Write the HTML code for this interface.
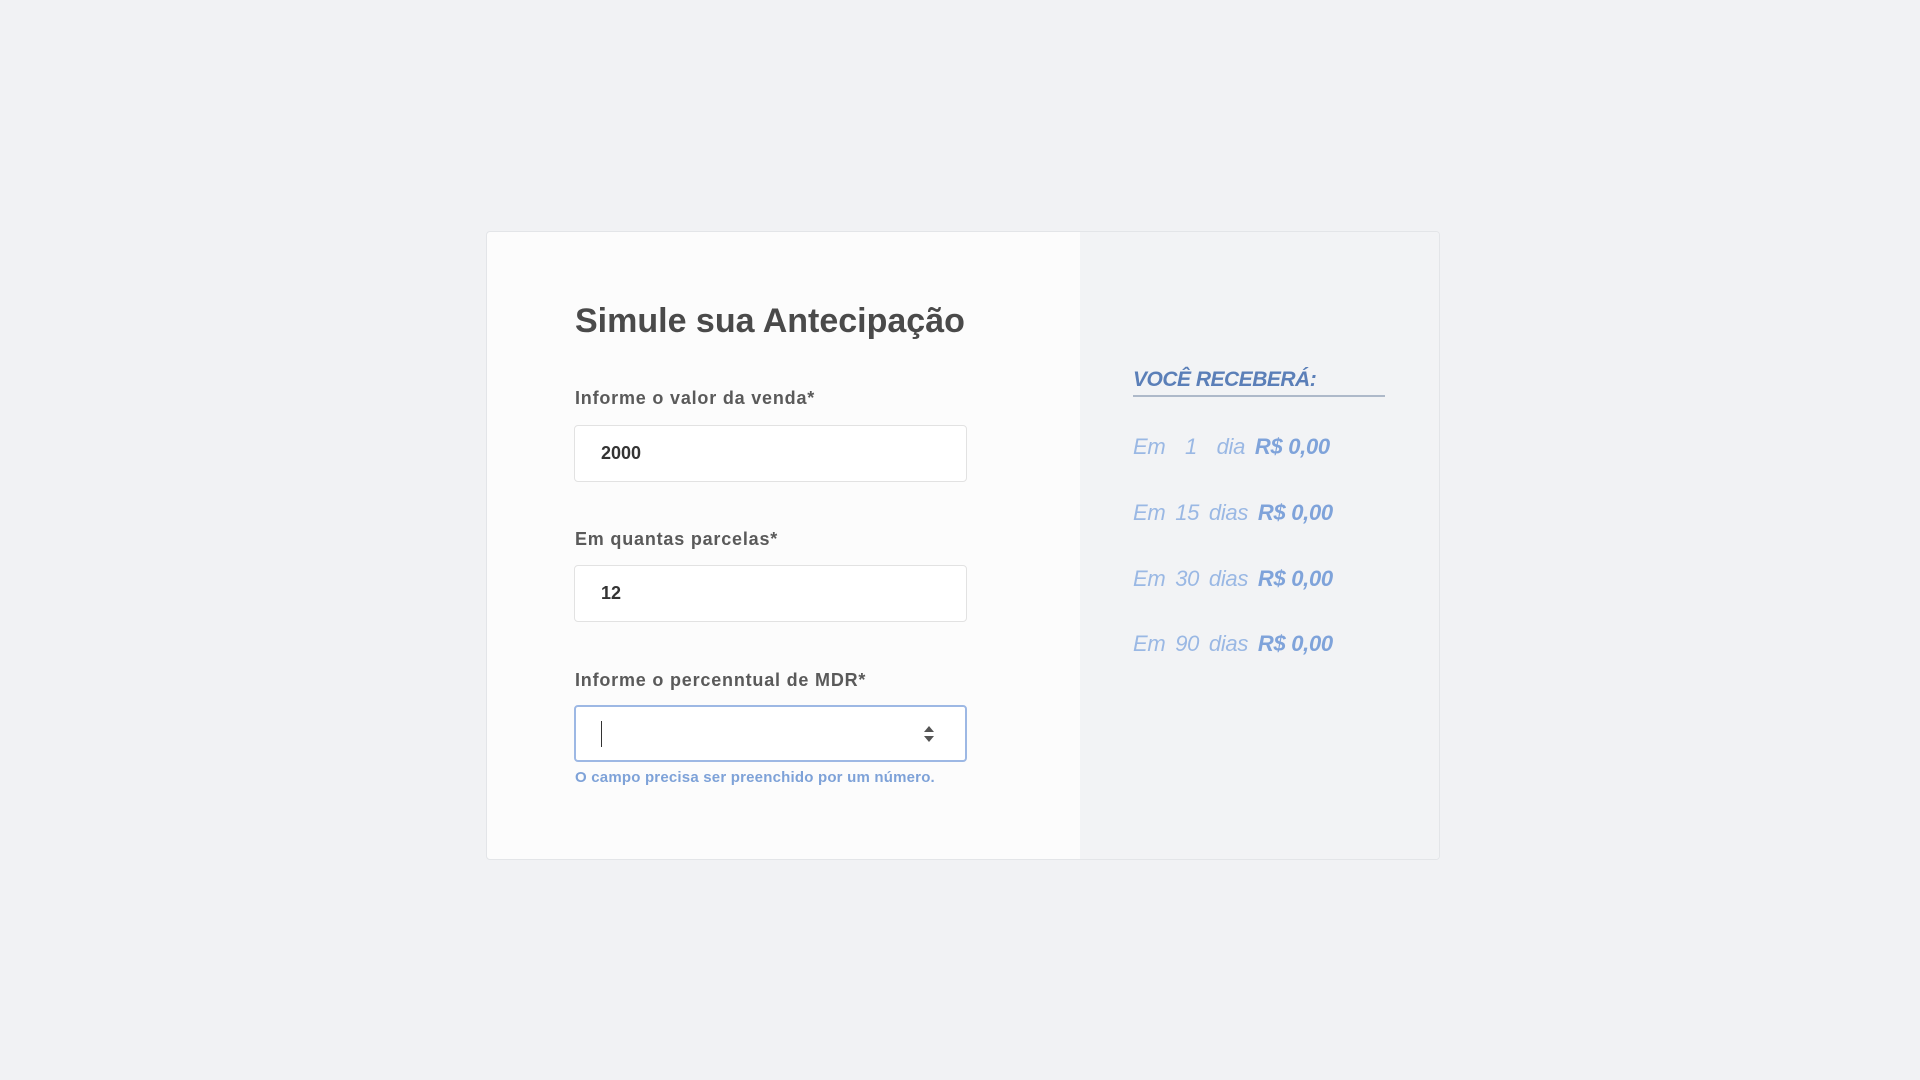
<!DOCTYPE html>
<html><head><meta charset="utf-8"><style>
*{margin:0;padding:0;box-sizing:border-box}
body{width:1920px;height:1080px;background:#f1f2f4;font-family:"Liberation Sans",sans-serif;position:relative;overflow:hidden}
.card{position:absolute;left:486px;top:231px;width:954px;height:629px;border:1px solid #e3e5e8;border-radius:4px;background:#fcfcfc;overflow:hidden}
.right{position:absolute;left:593px;top:0;width:361px;height:100%;background:#f2f3f5}
.abs{position:absolute}
h1{position:absolute;left:88px;top:70px;font-size:34px;font-weight:bold;color:#4a4a4a;letter-spacing:0px}
.lbl{position:absolute;left:88px;font-size:18px;font-weight:bold;color:#5a5a5a;letter-spacing:0.8px}
.inp{position:absolute;left:87px;width:393px;height:57px;border:1px solid #e2e2e2;border-radius:4px;background:#fff;font-size:18px;font-weight:bold;color:#333;padding:0 0 0 26px;line-height:55px}
.inp.f{border:2px solid #9db8e4;line-height:53px;padding-left:25px}
.help{position:absolute;left:88px;top:537px;font-size:15px;font-weight:bold;color:#7ea2d8;letter-spacing:0.2px}
.vr{position:absolute;left:646px;top:136px;font-size:21px;font-weight:bold;font-style:italic;color:#5b7fb8;letter-spacing:-0.5px}
.ul{position:absolute;left:646px;top:163px;width:252px;height:2px;background:#aeb9c9}
.row{position:absolute;left:646px;font-size:22px;font-style:italic;color:#9ab8e4;word-spacing:4px;letter-spacing:-0.3px}
.row b{color:#7fa3da;word-spacing:0}
</style></head><body>
<div class="card">
<div class="right"></div>
<h1>Simule sua Antecipação</h1>
<div class="lbl" style="top:156px">Informe o valor da venda*</div>
<div class="inp" style="top:193px">2000</div>
<div class="lbl" style="top:297px">Em quantas parcelas*</div>
<div class="inp" style="top:333px">12</div>
<div class="lbl" style="top:438px">Informe o percenntual de MDR*</div>
<div class="inp f" style="top:473px"><span style="display:inline-block;width:1px;height:26px;background:#333;vertical-align:middle"></span>
<svg class="abs" style="left:346px;top:16px" width="14" height="22" viewBox="0 0 14 22"><path d="M7 3 L12 9 H2Z M7 19 L12 13 H2Z" fill="#555"/></svg></div>
<div class="help">O campo precisa ser preenchido por um número.</div>
<div class="vr">VOCÊ RECEBERÁ:</div>
<div class="ul"></div>
<div class="row" style="top:202px">Em &nbsp;1 &nbsp;dia <b>R$ 0,00</b></div>
<div class="row" style="top:268px">Em 15 dias <b>R$ 0,00</b></div>
<div class="row" style="top:334px">Em 30 dias <b>R$ 0,00</b></div>
<div class="row" style="top:399px">Em 90 dias <b>R$ 0,00</b></div>
</div>
</body></html>
